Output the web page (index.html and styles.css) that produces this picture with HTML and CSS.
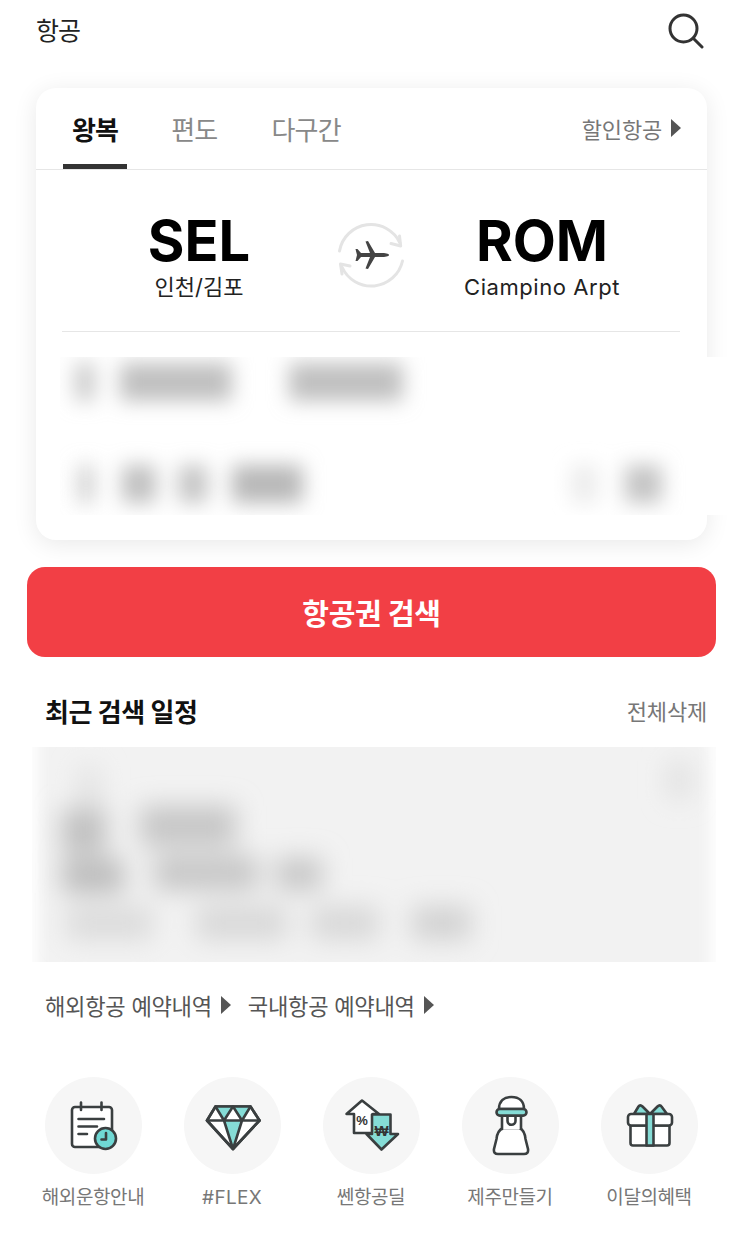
FILE: index.html
```html
<!DOCTYPE html>
<html lang="ko">
<head>
    <meta charset="UTF-8">
    <meta name="viewport" content="width=device-width, initial-scale=1.0">
    <title>항공</title>
    <link rel="stylesheet" href="styles.css">
</head>
<body>
    <header class="top-bar">
        <h1 class="top-title">항공</h1>
        <svg class="search-icon" viewBox="0 0 36 36" fill="none" stroke="#333" stroke-width="3" stroke-linecap="round">
            <circle cx="15.5" cy="15.5" r="13.5"/>
            <path d="M25.5 25.5 L34 34"/>
        </svg>
    </header>

    <section class="card">
        <div class="tabs">
            <a class="tab active">왕복</a>
            <a class="tab">편도</a>
            <a class="tab">다구간</a>
            <a class="discount">할인항공<i class="arrow"></i></a>
        </div>

        <div class="route">
            <div class="city">
                <div class="code">SEL</div>
                <div class="city-name">인천/김포</div>
            </div>
            <svg class="swap" viewBox="0 0 85 80" fill="none" stroke="#e4e4e4" stroke-width="3" stroke-linecap="round" stroke-linejoin="round">
                <path d="M10.5 36 A32 32 0 0 1 71 28"/>
                <path d="M70.5 21 L71.7 31 L62 28.5"/>
                <path d="M73.5 46 A32 32 0 0 1 13 52"/>
                <path d="M21 51 L11.5 49 L13 59"/>
                <path fill="#444" stroke="none" d="M60 40 C60 38.5 56 38 52 38 L46 38 L39 26 L36.5 26.5 L41 38 L32 38 L28.5 34 L26.5 34 L28 40 L26.5 46 L28.5 46 L32 42 L41 42 L36.5 53.5 L39 54 L46 42 L52 42 C56 42 60 41.5 60 40Z"/>
            </svg>
            <div class="city">
                <div class="code">ROM</div>
                <div class="city-name latin">Ciampino Arpt</div>
            </div>
        </div>

        <hr class="divider">

        <!-- date and passenger rows are blurred in the picture -->
        <svg class="blur-form" viewBox="0 0 675 158">
            <defs>
                <filter id="soft" x="-30%" y="-60%" width="160%" height="220%">
                    <feGaussianBlur stdDeviation="10"/>
                </filter>
            </defs>
            <g filter="url(#soft)" fill="#c0c0c0">
                <rect x="15" y="6" width="20" height="38" fill="#cacaca"/>
                <rect x="60" y="6" width="112" height="38"/>
                <rect x="229" y="6" width="114" height="38"/>
                <rect x="18" y="108" width="16" height="38" fill="#cfcfcf"/>
                <rect x="62" y="108" width="34" height="38"/>
                <rect x="118" y="108" width="30" height="38" fill="#c6c6c6"/>
                <rect x="172" y="108" width="71" height="38" fill="#b8b8b8"/>
                <rect x="511" y="108" width="27" height="38" fill="#ececec"/>
                <rect x="565" y="108" width="37" height="38" fill="#c4c4c4"/>
            </g>
        </svg>
    </section>

    <button class="search-btn">항공권 검색</button>

    <div class="recent-head">
        <h2 class="recent-title">최근 검색 일정</h2>
        <a class="clear-all">전체삭제</a>
    </div>

    <svg class="blur-recent" viewBox="0 0 684 215">
        <defs>
            <filter id="edge" x="-5%" y="-20%" width="110%" height="140%">
                <feGaussianBlur stdDeviation="7"/>
            </filter>
            <filter id="softer" x="-40%" y="-60%" width="180%" height="220%">
                <feGaussianBlur stdDeviation="13"/>
            </filter>
        </defs>
        <rect x="6" y="-30" width="672" height="275" fill="#f2f2f2" filter="url(#edge)"/>
        <g filter="url(#softer)" fill="#c6c6c6">
            <rect x="46" y="20" width="22" height="54" fill="#e2e2e2"/>
            <rect x="636" y="14" width="22" height="38" fill="#e0e0e0"/>
            <rect x="30" y="62" width="44" height="44" fill="#c0c0c0"/>
            <rect x="30" y="112" width="62" height="34" fill="#bcbcbc"/>
            <rect x="108" y="59" width="96" height="40"/>
            <rect x="122" y="109" width="104" height="34"/>
            <rect x="244" y="111" width="46" height="32"/>
            <rect x="34" y="159" width="87" height="34" fill="#dcdcdc"/>
            <rect x="164" y="159" width="91" height="34" fill="#d8d8d8"/>
            <rect x="279" y="159" width="68" height="34" fill="#d8d8d8"/>
            <rect x="380" y="159" width="59" height="34" fill="#d2d2d2"/>
        </g>
    </svg>

    <div class="booking-links">
        <a class="booking-link">해외항공 예약내역<i class="arrow"></i></a>
        <a class="booking-link">국내항공 예약내역<i class="arrow"></i></a>
    </div>

    <nav class="menu">
        <a class="menu-item">
            <svg class="menu-icon" viewBox="0 0 97 97" fill="none" stroke="#3a3f40" stroke-width="2.6" stroke-linecap="round" stroke-linejoin="round">
                <rect x="27" y="30" width="40" height="40" rx="3" fill="#fff"/>
                <path d="M36 25.5 V33 M56.5 25.5 V33"/>
                <path d="M33.5 42 H59 M33.5 49.5 H52 M33.5 57 H42"/>
                <circle cx="60.5" cy="61.5" r="10.5" fill="#6fd8d4"/>
                <path d="M61 56 V62.5 H56.5"/>
            </svg>
            <span class="menu-label">해외운항안내</span>
        </a>
        <a class="menu-item">
            <svg class="menu-icon" viewBox="0 0 97 97" fill="none" stroke="#3a3f40" stroke-width="2.6" stroke-linecap="round" stroke-linejoin="round">
                <path fill="#fff" d="M31.5 29.5 H66.5 L75.5 43.5 L49 72 L23 43.5 Z"/>
                <path fill="#85dcd6" stroke="none" d="M31.5 29.5 H49 L40 43.5 Z M49 29.5 H66.5 L58 43.5 Z M40 43.5 H58 L49 72 Z"/>
                <path d="M31.5 29.5 H66.5 L75.5 43.5 L49 72 L23 43.5 Z"/>
                <path d="M23 43.5 H75.5 M31.5 29.5 L40 43.5 L49 29.5 L58 43.5 L66.5 29.5 M40 43.5 L49 72 L58 43.5"/>
            </svg>
            <span class="menu-label latin-label">#FLEX</span>
        </a>
        <a class="menu-item">
            <svg class="menu-icon" viewBox="0 0 97 97" fill="none" stroke="#3a3f40" stroke-width="2.6" stroke-linejoin="round">
                <path fill="#fff" d="M39 23.5 L23.5 37 H31 V56 H50 V37 H56 Z"/>
                <path fill="#85dcd6" d="M49 37.5 H67.5 V57 H75 L58.5 72.5 L43.5 57 H49 Z"/>
                <text class="icon-text" x="39" y="48" text-anchor="middle" stroke="none" fill="#333">%</text>
                <text class="icon-text won" x="58.5" y="59" text-anchor="middle" stroke="none" fill="#333">₩</text>
            </svg>
            <span class="menu-label">쎈항공딜</span>
        </a>
        <a class="menu-item">
            <svg class="menu-icon" viewBox="0 0 97 97" fill="none" stroke="#3a3f40" stroke-width="2.6" stroke-linecap="round" stroke-linejoin="round">
                <path fill="#fff" d="M41 51 C36.5 53 35 57 34.5 62 L32 72 C31.5 75.5 33 77 36 77 H62 C65 77 66.5 75.5 66 72 L63.5 62 C63 57 62 53 57.5 51 Z"/>
                <path fill="#fff" stroke="none" d="M40 38 H59 V52 H40 Z"/>
                <path d="M40 38 V52 M59 38 V52"/>
                <path d="M45.5 38 V44 C45.5 49 53.5 49 53.5 44 V38"/>
                <path fill="#fff" d="M37 32 C37 24 42 20 49.5 20 C57 20 62 24 62 32 Z"/>
                <rect x="34.5" y="32" width="30" height="6.6" rx="3.3" fill="#85dcd6"/>
            </svg>
            <span class="menu-label">제주만들기</span>
        </a>
        <a class="menu-item">
            <svg class="menu-icon" viewBox="0 0 97 97" fill="none" stroke="#3a3f40" stroke-width="2.6" stroke-linecap="round" stroke-linejoin="round">
                <path fill="#85dcd6" d="M49 37 L41.5 29.5 C40 28 38.5 28 37.5 29.5 L33 37 Z M49 37 L56.5 29.5 C58 28 59.5 28 60.5 29.5 L66 37 Z"/>
                <path fill="#fff" d="M29.5 48.5 H68.5 V66 C68.5 67.5 67.5 68.5 66 68.5 H32 C30.5 68.5 29.5 67.5 29.5 66 Z"/>
                <rect x="27" y="37" width="44" height="11.5" rx="3" fill="#fff"/>
                <path fill="#85dcd6" d="M45.5 37 H52.5 V68.5 H45.5 Z"/>
            </svg>
            <span class="menu-label">이달의혜택</span>
        </a>
    </nav>
</body>
</html>
```

FILE: styles.css
```css
* {
    box-sizing: border-box;
}
body {
    width: 743px;
    height: 1233px;
    margin: 0;
    overflow: hidden;
    background: #fff;
    color: #222;
    font-family: Inter, "Noto Sans CJK KR", sans-serif;
}
a {
    color: inherit;
    text-decoration: none;
}
svg {
    display: block;
}

.top-bar {
    display: flex;
    justify-content: space-between;
    align-items: center;
    height: 62px;
    padding: 0 39px 0 36px;
}
.top-title {
    margin: 0 0 4px;
    font-size: 25px;
    font-weight: 400;
    letter-spacing: -1px;
}
.search-icon {
    width: 36px;
    height: 36px;
}

.card {
    width: 671px;
    height: 452px;
    margin: 26px 0 0 36px;
    background: #fff;
    border-radius: 20px;
    box-shadow: 0 4px 24px rgba(0, 0, 0, 0.09);
}
.tabs {
    display: flex;
    align-items: center;
    height: 82px;
    padding: 0 26px 0 27px;
    border-bottom: 1px solid #e6e6e6;
}
.tab {
    display: flex;
    align-items: center;
    justify-content: center;
    height: 81px;
    margin-right: 36px;
    padding: 4px 9px 0;
    border-bottom: 5px solid transparent;
    color: #888;
    font-size: 26px;
    letter-spacing: -0.8px;
}
.tab.active {
    margin-right: 35px;
    border-bottom-color: #333;
    color: #111;
    font-weight: 700;
}
.discount {
    display: flex;
    align-items: center;
    margin-left: auto;
    padding-bottom: 2px;
    color: #777;
    font-size: 22px;
    letter-spacing: -0.2px;
}
.arrow {
    display: inline-block;
    width: 0;
    height: 0;
    margin-left: 9px;
    border-top: 9px solid transparent;
    border-bottom: 9px solid transparent;
    border-left: 10px solid #555;
}

.route {
    display: grid;
    grid-template-columns: 206px 140px 200px;
    align-items: center;
    height: 161px;
    padding-left: 60px;
}
.city {
    padding-top: 11px;
    text-align: center;
}
.code {
    color: #000;
    font-size: 56px;
    font-weight: 700;
    line-height: 62px;
}
.city-name {
    margin-top: -1px;
    color: #222;
    font-size: 22px;
    line-height: 32px;
}
.city-name.latin {
    letter-spacing: 0.55px;
}
.swap {
    width: 85px;
    height: 80px;
    margin: 8px 0 0 27px;
}
.divider {
    height: 1px;
    margin: 0 27px 0 26px;
    border: 0;
    background: #e6e6e6;
}
.blur-form {
    width: 675px;
    height: 158px;
    margin: 25px 0 0 24px;
    background: #fff;
}

.search-btn {
    display: block;
    width: 689px;
    height: 90px;
    margin: 27px 0 0 27px;
    padding-bottom: 2px;
    border: 0;
    border-radius: 18px;
    background: #f23f45;
    color: #fff;
    font-family: inherit;
    font-size: 29px;
    font-weight: 700;
    letter-spacing: -0.3px;
}

.recent-head {
    display: flex;
    justify-content: space-between;
    align-items: center;
    height: 90px;
    padding: 16px 36px 0 45px;
}
.recent-title {
    margin: 0;
    color: #111;
    font-size: 26px;
    font-weight: 700;
    letter-spacing: -0.4px;
}
.clear-all {
    color: #777;
    font-size: 22px;
    letter-spacing: -0.2px;
}
.blur-recent {
    width: 684px;
    height: 215px;
    margin-left: 32px;
}

.booking-links {
    display: flex;
    gap: 17px;
    height: 115px;
    padding: 25px 0 0 45px;
}
.booking-link {
    display: flex;
    align-items: center;
    height: 36px;
    color: #555;
    font-size: 22.2px;
    letter-spacing: -0.3px;
}

.menu {
    display: grid;
    grid-template-columns: repeat(5, 139px);
    padding-left: 23.5px;
}
.menu-item {
    display: flex;
    flex-direction: column;
    align-items: center;
}
.menu-icon {
    width: 97px;
    height: 97px;
    border-radius: 50%;
    background: #f6f6f6;
}
.menu-label {
    margin-top: 10px;
    color: #777;
    font-size: 19px;
    line-height: 28px;
    letter-spacing: -0.4px;
}
.latin-label {
    letter-spacing: 0.3px;
}
.icon-text {
    font-family: "Liberation Sans", sans-serif;
    font-size: 13px;
    font-weight: 700;
}
.icon-text.won {
    font-size: 15px;
}
```
